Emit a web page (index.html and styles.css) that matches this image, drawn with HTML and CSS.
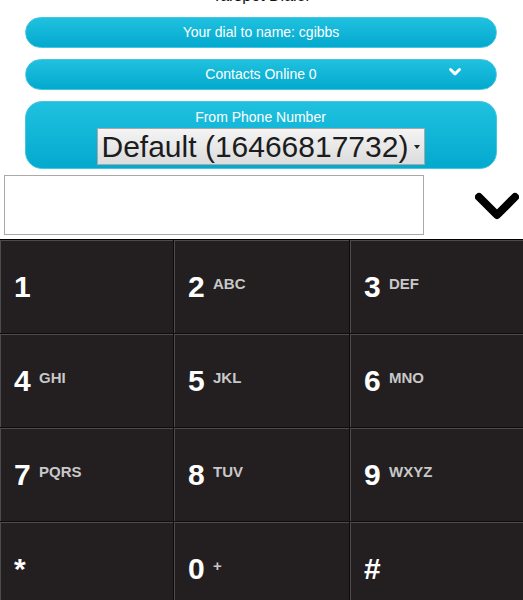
FILE: index.html
```html
<!DOCTYPE html>
<html>
<head>
<meta charset="utf-8">
<title>Tarspot Dialer</title>
<link rel="stylesheet" href="styles.css">
</head>
<body>
<h1 class="title">Tarspot Dialer</h1>
<div class="panel">
  <div class="pill">Your dial to name: cgibbs</div>
  <div class="pill pill-toggle">Contacts Online 0
    <svg class="mini-chev" width="14" height="10" viewBox="0 0 14 10"><polyline points="2.5,2.5 7,6.8 11.5,2.5" fill="none" stroke="#fff" stroke-width="3" stroke-linecap="round" stroke-linejoin="round"/></svg>
  </div>
  <div class="from">
    <div class="from-label">From Phone Number</div>
    <span class="select-wrap"><select class="num-select"><option>Default (16466817732)</option></select></span>
  </div>
</div>
<div class="entry">
  <input class="dial-input" type="text">
  <svg class="big-chev" width="44" height="32" viewBox="0 0 44 32"><polyline points="4,5 22,23 40,5" fill="none" stroke="#000" stroke-width="8" stroke-linecap="round" stroke-linejoin="round"/></svg>
</div>
<div class="keypad">
  <div class="key"><span class="kl"><span class="d">1</span></span></div>
  <div class="key"><span class="kl"><span class="d">2</span> <span class="l">ABC</span></span></div>
  <div class="key"><span class="kl"><span class="d">3</span> <span class="l">DEF</span></span></div>
  <div class="key"><span class="kl"><span class="d">4</span> <span class="l">GHI</span></span></div>
  <div class="key"><span class="kl"><span class="d">5</span> <span class="l">JKL</span></span></div>
  <div class="key"><span class="kl"><span class="d">6</span> <span class="l">MNO</span></span></div>
  <div class="key"><span class="kl"><span class="d">7</span> <span class="l">PQRS</span></span></div>
  <div class="key"><span class="kl"><span class="d">8</span> <span class="l">TUV</span></span></div>
  <div class="key"><span class="kl"><span class="d">9</span> <span class="l">WXYZ</span></span></div>
  <div class="key"><span class="kl"><span class="d">*</span></span></div>
  <div class="key"><span class="kl"><span class="d">0</span> <span class="l">+</span></span></div>
  <div class="key"><span class="kl"><span class="d">#</span></span></div>
</div>
</body>
</html>
```
FILE: styles.css
```css
html, body {
  margin: 0;
  padding: 0;
  background: #fff;
  font-family: "Liberation Sans", Arial, sans-serif;
  overflow: hidden;
}
.title {
  margin: -13px 0 12px;
  font-size: 16px;
  line-height: 18px;
  font-weight: normal;
  text-align: center;
  color: #111;
}
.panel {
  padding: 0 26px 0 25px;
  display: flex;
  flex-direction: column;
  gap: 11px;
}
.pill {
  position: relative;
  height: 31px;
  box-sizing: border-box;
  border: 1px solid #45c6e0;
  border-radius: 16px;
  background: linear-gradient(#20c1df, #03a9ce);
  color: #fff;
  font-size: 14px;
  line-height: 29px;
  text-align: center;
}
.mini-chev {
  position: absolute;
  right: 34px;
  top: 7px;
}
.from {
  height: 68px;
  box-sizing: border-box;
  border: 1px solid #45c6e0;
  border-radius: 17px;
  background: linear-gradient(#20c1df, #03a9ce);
  display: flex;
  flex-direction: column;
  align-items: center;
  padding-top: 7px;
}
.from-label {
  color: #fff;
  font-size: 14px;
  line-height: 17px;
  margin-left: -1px;
}
.select-wrap {
  position: relative;
  display: block;
  margin-top: 2px;
  margin-left: -1px;
}
.select-wrap::after {
  content: "";
  position: absolute;
  right: 5px;
  top: 17px;
  border-left: 3px solid transparent;
  border-right: 3px solid transparent;
  border-top: 4px solid #222;
}
.num-select {
  appearance: none;
  -webkit-appearance: none;
  width: 328px;
  height: 37px;
  box-sizing: border-box;
  border: 1px solid #a8a8a8;
  border-radius: 0;
  background: linear-gradient(#f4f4f4, #dcdcdc);
  color: #1c1c1c;
  font-family: "Liberation Sans", Arial, sans-serif;
  font-size: 30px;
  line-height: 35px;
  padding: 0 14px 0 4px;
  margin: 0;
}
.entry {
  display: flex;
  align-items: center;
  padding: 6px 4px 0 4px;
}
.dial-input {
  flex: 0 0 420px;
  width: 420px;
  height: 60px;
  box-sizing: border-box;
  border: 1px solid #a9a9a9;
  margin: 0;
  padding: 0;
  background: #fff;
}
.big-chev {
  flex: 0 0 44px;
  margin-left: 51px;
  margin-top: 6px;
}
.keypad {
  margin-top: 4px;
  border-top: 1px solid #000;
  display: grid;
  grid-template-columns: 173px 175px 1fr;
  grid-auto-rows: 93px;
  gap: 1px;
  background: #0c0c0c;
}
.key {
  background: #231f20;
  box-shadow: inset 1px 1px 0 #4c4c4c;
  display: flex;
  align-items: center;
  padding-left: 14px;
}
.kl {
  line-height: 30px;
  font-size: 30px;
  white-space: nowrap;
}
.d {
  color: #fff;
  font-weight: bold;
  font-size: 30px;
}
.l {
  color: #c8c8c8;
  font-weight: bold;
  font-size: 15px;
  line-height: 1;
  vertical-align: 8px;
}
```
